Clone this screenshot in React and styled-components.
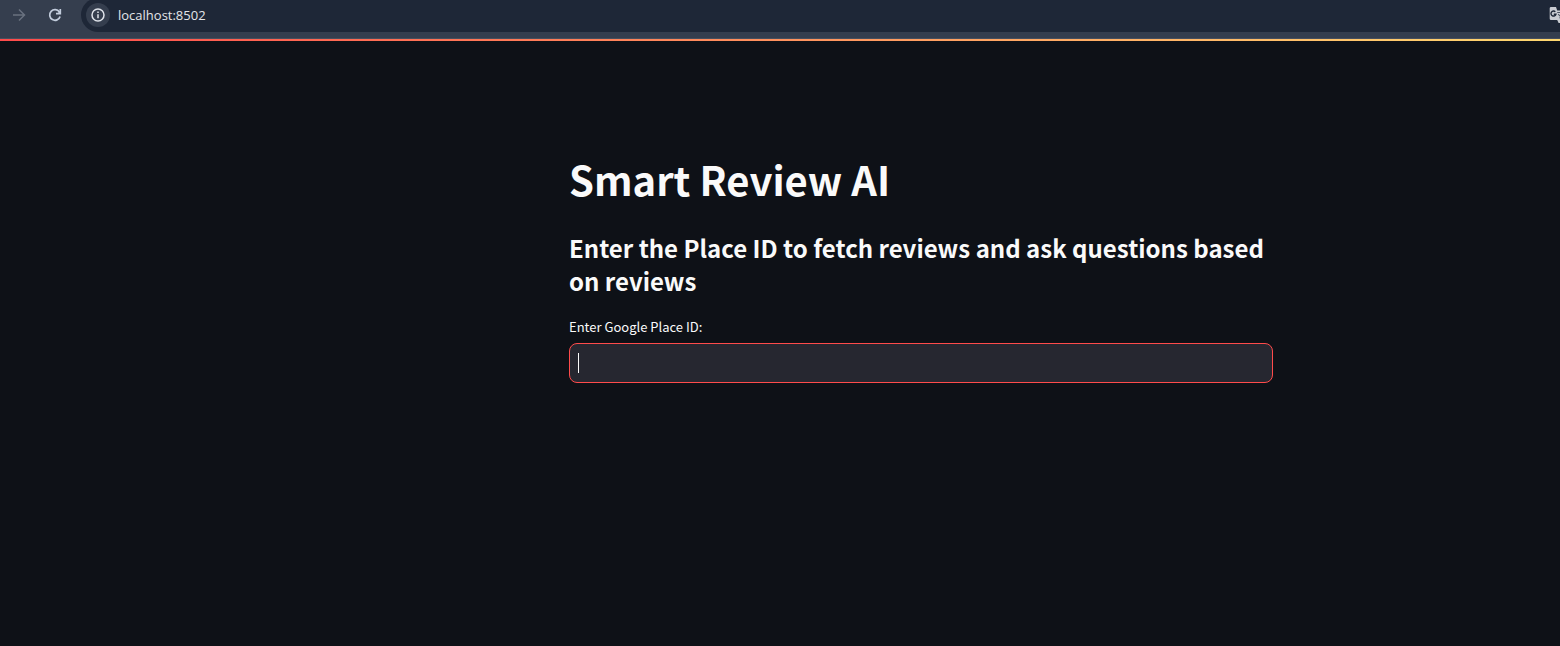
import React, { useState } from "react";
import styled, { createGlobalStyle } from "styled-components";

const GlobalStyle = createGlobalStyle`
  *, *::before, *::after { box-sizing: border-box; }
  html, body { margin: 0; background: #0e1117; }
  body {
    color: #fafafa;
    font-family: "Source Sans Pro", "Noto Sans CJK SC", sans-serif;
  }
`;

const Page = styled.div`
  min-height: 100vh;
  overflow: hidden;
`;

const Toolbar = styled.header`
  display: flex;
  align-items: flex-start;
  height: 39px;
  padding-left: 8px;
  overflow: hidden;
  background: #353e4e;
  border-bottom: 1px solid #474f5d;
`;

const ToolButton = styled.button`
  display: flex;
  align-items: center;
  justify-content: center;
  width: 22px;
  height: 30px;
  margin-right: 14px;
  padding: 0;
  border: 0;
  background: transparent;
  color: ${({ $dim }) => ($dim ? "#69717f" : "#c3cddd")};
`;

const AddressBar = styled.div`
  display: flex;
  flex: 1;
  align-items: center;
  height: 34px;
  margin-top: -2px;
  margin-left: 1px;
  padding-left: 5px;
  border-radius: 17px 0 0 17px;
  background: #1e2737;
`;

const SiteInfo = styled.button`
  display: flex;
  align-items: center;
  justify-content: center;
  width: 24px;
  height: 24px;
  padding: 0;
  border: 0;
  border-radius: 50%;
  background: #353e4e;
  color: #dfe3ea;
`;

const Address = styled.input`
  flex: 1;
  min-width: 0;
  padding: 0 0 0 8px;
  border: 0;
  outline: 0;
  background: transparent;
  color: #e3e5e9;
  font: 13px "Segoe UI", "Open Sans", sans-serif;
`;

const TranslateButton = styled.button`
  display: flex;
  flex: none;
  justify-content: flex-start;
  width: 11px;
  padding: 0;
  overflow: hidden;
  border: 0;
  background: transparent;

  svg {
    flex: none;
  }
`;

const Decoration = styled.div`
  height: 2px;
  background: linear-gradient(90deg, #ff4b4b, #ffd870);
`;

const Layout = styled.main`
  display: grid;
  grid-template-columns: minmax(16px, 569fr) minmax(0, 704px) minmax(16px, 287fr);
  padding: 112px 0 64px;
`;

const Content = styled.div`
  grid-column: 2;
  display: flex;
  flex-direction: column;
`;

const Title = styled.h1`
  margin: 0;
  font-size: 40px;
  font-weight: 700;
  line-height: 52px;
`;

const Subtitle = styled.h3`
  margin: 26px 0 0;
  font-size: 24px;
  font-weight: 600;
  line-height: 33px;
`;

const Label = styled.label`
  margin-top: 19px;
  font-size: 13px;
  line-height: 22px;
`;

const Field = styled.div`
  position: relative;
  margin-top: 5px;
`;

const TextInput = styled.input`
  display: block;
  width: 100%;
  height: 40px;
  padding: 8px;
  border: 1px solid #ff4b4b;
  border-radius: 8px;
  outline: 0;
  background: #262730;
  color: #fafafa;
  caret-color: transparent;
  font: inherit;
  font-size: 16px;
`;

const Caret = styled.span`
  position: absolute;
  top: 10px;
  left: 9px;
  width: 1px;
  height: 20px;
  background: #fafafa;
  pointer-events: none;
`;

function ForwardIcon() {
  return (
    <svg width="14" height="14" viewBox="0 0 14 14" fill="none" stroke="currentColor" strokeWidth="1.5">
      <path d="M1 7h11M7 1.5 12.5 7 7 12.5" />
    </svg>
  );
}

function ReloadIcon() {
  return (
    <svg width="14" height="14" viewBox="0 0 14 14" fill="none" stroke="currentColor" strokeWidth="1.7">
      <path d="M12.1 8.4A5.3 5.3 0 1 1 11.4 4" />
      <path d="M12.3 1v4.6H8" />
      <path d="M12.3 2.5v3.1H9.5Z" fill="currentColor" stroke="none" />
    </svg>
  );
}

function InfoIcon() {
  return (
    <svg width="14" height="14" viewBox="0 0 14 14" fill="none" stroke="currentColor" strokeWidth="1.5">
      <circle cx="7" cy="7" r="6" />
      <path d="M7 6.2v4M7 3.6v1.5" />
    </svg>
  );
}

function TranslateIcon() {
  return (
    <svg width="18" height="18" viewBox="0 0 18 18" fill="none">
      <path d="M2 1h5l1.2 3.4H16a1 1 0 0 1 1 1V16a1 1 0 0 1-1 1H9.6L8.2 14H2a1.3 1.3 0 0 1-1.3-1.3V2.3A1.3 1.3 0 0 1 2 1Z" fill="#c9ccd2" />
      <path d="M6.3 5.8A2.5 2.5 0 1 0 6.9 8.2H4.8" stroke="#1e2737" strokeWidth="1.4" />
      <path d="M8.2 6.5h7M12 5.5v1M14.5 7c-.5 2-2 4-4 5M9.2 8.2l4 4" stroke="#4b5362" strokeWidth="1.1" />
    </svg>
  );
}

export default function App() {
  const [placeId, setPlaceId] = useState("");
  return (
    <Page>
      <GlobalStyle />
      <Toolbar>
        <ToolButton $dim aria-label="Forward"><ForwardIcon /></ToolButton>
        <ToolButton aria-label="Reload"><ReloadIcon /></ToolButton>
        <AddressBar>
          <SiteInfo aria-label="Site information"><InfoIcon /></SiteInfo>
          <Address aria-label="Address" defaultValue="localhost:8502" />
          <TranslateButton aria-label="Translate"><TranslateIcon /></TranslateButton>
        </AddressBar>
      </Toolbar>
      <Decoration />
      <Layout>
        <Content>
          <Title>Smart Review AI</Title>
          <Subtitle>Enter the Place ID to fetch reviews and ask questions based on reviews</Subtitle>
          <Label htmlFor="place-id">Enter Google Place ID:</Label>
          <Field>
            <TextInput
              id="place-id"
              type="text"
              value={placeId}
              onChange={(event) => setPlaceId(event.target.value)}
            />
            {placeId === "" && <Caret />}
          </Field>
        </Content>
      </Layout>
    </Page>
  );
}
